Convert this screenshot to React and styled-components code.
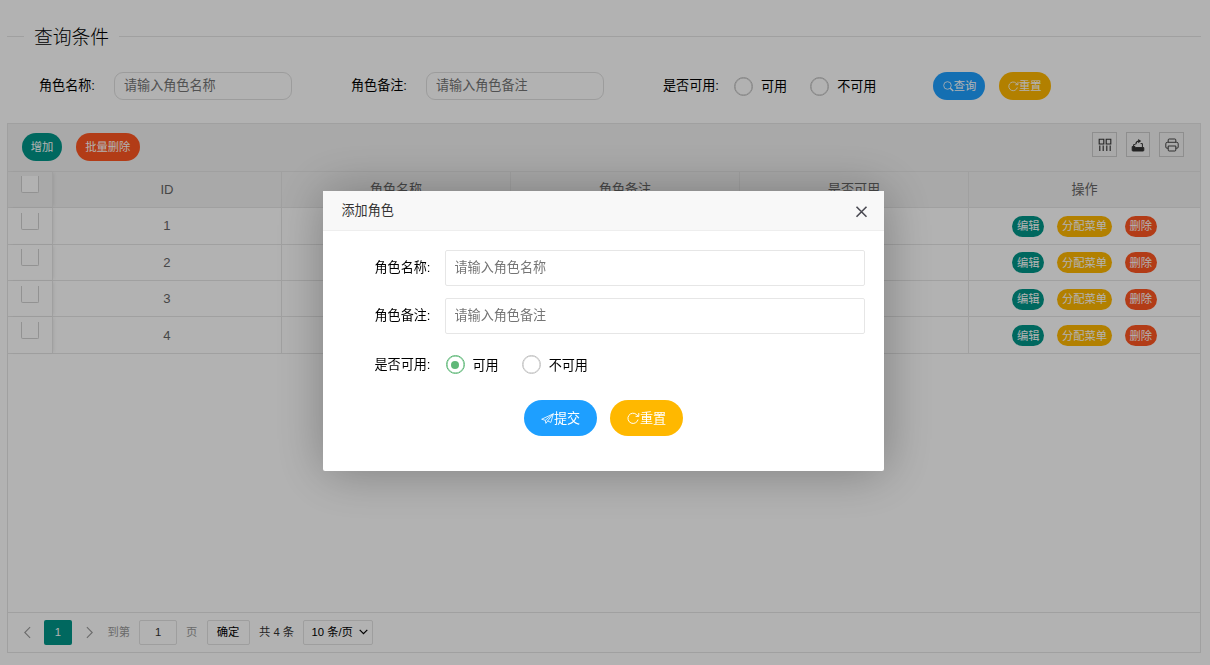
import React from 'react'
import styled, { createGlobalStyle, css } from 'styled-components'

const GlobalStyle = createGlobalStyle`
* { box-sizing: border-box; }
html, body { height: 100%; overflow: hidden; }
body {
    margin: 0;
    background: #fff;
    color: #000;
    font-family: "Liberation Sans", "Noto Sans CJK SC", sans-serif;
    font-size: 13.1px;
    line-height: 22px;
}
button, input { font-family: inherit; }
`

const colors = {
    green: '#009688',
    blue: '#1e9fff',
    yellow: '#ffb800',
    red: '#ff5722',
}

const Page = styled.main`
padding: 21px 9px 12px 7px;
height: 665px;
display: flex;
flex-direction: column;
`

const Search = styled.fieldset`
flex: none;
height: 101.5px;
margin: 0;
padding: 21px 0 0;
border: 0;
border-top: 1px solid #e6e6e6;
min-width: 0;
`

const Legend = styled.legend`
height: 30px;
margin-left: 17px;
padding: 0 10px;
font-size: 18.8px;
font-weight: 300;
line-height: 33px;
`

const SearchRow = styled.div`
display: flex;
align-items: center;
height: 28px;
padding-left: 32px;
`

const Label = styled.label`
flex: none;
width: ${props => props.$width || 75}px;
white-space: nowrap;
`

const inputText = css`
color: #000;
background: #fff;
outline: none;
font-size: 13.1px;
&::placeholder { color: #757575; opacity: 1; }
`

const SearchInput = styled.input`
${inputText}
width: 178px;
height: 28px;
margin-right: 59px;
padding: 0 0 1px 9px;
border: 1px solid #e0e0e0;
border-radius: 9px;
`

const RadioItem = styled.div`
display: flex;
align-items: center;
gap: 8px;
margin-right: 23px;
white-space: nowrap;
`

const RadioText = styled.span`
padding-top: 2px;
`

const RadioMark = styled.span`
width: 19px;
height: 19px;
border-radius: 50%;
border: 1.5px solid ${props => (props.$on ? '#5fb878' : '#c2c2c2')};
box-shadow: inset 0 0 0 .5px ${props => (props.$on ? '#5fb878' : '#c2c2c2')};
display: flex;
align-items: center;
justify-content: center;
&::after {
    content: '';
    width: 8px;
    height: 8px;
    border-radius: 50%;
    background: ${props => (props.$on ? '#5fb878' : 'transparent')};
}
`

const sizes = {
    normal: css`height: 36px; width: 73px; padding: 1px 0 0; font-size: 13.1px;`,
    sm: css`height: 28px; padding: 1px 9.2px 0; font-size: 11.3px;`,
    xs: css`height: 21px; padding: 1px 4.7px 0; font-size: 11.3px;`,
}

const Button = styled.button`
display: inline-flex;
align-items: center;
justify-content: center;
flex: none;
border: 0;
border-radius: 20px;
color: #fff;
white-space: nowrap;
line-height: 1;
background: ${props => colors[props.$color]};
${props => sizes[props.$size || 'sm']}
svg { flex: none; }
`

const SearchButtons = styled.div`
display: flex;
gap: 13.3px;
margin-left: 34px;
`

const TableBox = styled.section`
flex: 1;
display: flex;
flex-direction: column;
border: 1px solid #e6e6e6;
min-height: 0;
`

const Toolbar = styled.div`
flex: none;
display: flex;
align-items: center;
height: 48.2px;
padding: 0 16px 0 13.5px;
background: #f2f2f2;
border-bottom: 1px solid #e6e6e6;
`

const ToolButtons = styled.div`
display: flex;
gap: 13.5px;
`

const Tools = styled.div`
display: flex;
gap: 9px;
margin-left: auto;
padding-bottom: 5px;
`

const Tool = styled.span`
display: flex;
align-items: center;
justify-content: center;
width: 24.7px;
height: 25px;
padding-left: 1px;
border: 1px solid #ccc;
color: #333;
`

const Row = styled.div`
flex: none;
display: grid;
grid-template-columns: 45px repeat(4, 229px) 1fr;
height: 36.45px;
color: #666;
border-bottom: 1px solid #e6e6e6;
background: ${props => (props.$head ? '#f2f2f2' : '#fff')};
`

const Cell = styled.div`
display: flex;
align-items: center;
justify-content: center;
padding-top: 1px;
border-right: 1px solid #e6e6e6;
&:first-child {
    align-items: flex-start;
    justify-content: flex-start;
    padding: 4.5px 0 0 13px;
    box-shadow: 2px 0 3px -1px rgba(0, 0, 0, .08);
}
&:last-child {
    border-right: 0;
    gap: 13px;
}
`

const CheckMark = styled.span`
width: 18px;
height: 17px;
border: 1px solid #d2d2d2;
border-top: 0;
border-radius: 0 0 2px 2px;
background: #fff;
`

const Pager = styled.div`
display: flex;
align-items: center;
height: 40px;
margin-top: auto;
padding: 0 0 1px 12px;
border-top: 1px solid #e6e6e6;
font-size: 11.3px;
color: #333;
`

const PageArrow = styled.span`
display: flex;
justify-content: center;
width: 13px;
color: #999;
`

const PageNow = styled.span`
width: 28px;
margin: 0 11px;
line-height: 25px;
border-radius: 2px;
text-align: center;
color: #fff;
background: #009688;
`

const Muted = styled.span`
color: #999;
`

const JumpText = styled(Muted)`
margin-left: 11.5px;
`

const PageInput = styled.input`
width: 38px;
height: 25px;
margin: 0 9px;
padding: 0;
border: 1px solid #e2e2e2;
border-radius: 2px;
text-align: center;
font-size: 11.3px;
color: #333;
`

const PageBox = styled.span`
display: flex;
align-items: center;
justify-content: space-between;
height: 25px;
margin: 0 9.3px;
padding: 0 ${props => (props.$select ? '4px 0 7px' : '9px')};
width: ${props => (props.$select ? 70 : 43)}px;
border: 1px solid #e2e2e2;
border-radius: 2px;
color: #000;
white-space: nowrap;
`

const Shade = styled.div`
position: fixed;
inset: 0;
display: flex;
align-items: center;
justify-content: center;
padding: 0 3px 3px 0;
background: rgba(0, 0, 0, .3);
`

const Dialog = styled.div`
width: 561px;
height: 280px;
background: #fff;
border-radius: 2px;
box-shadow: 1px 1px 50px rgba(0, 0, 0, .3);
`

const DialogTitle = styled.div`
display: flex;
align-items: center;
justify-content: space-between;
height: 40px;
padding: 0 16px 0 18.5px;
color: #333;
background: #f8f8f8;
border-bottom: 1px solid #eee;
svg { margin-top: 1px; }
`

const DialogForm = styled.div`
display: flex;
flex-direction: column;
gap: 12.4px;
padding: 19px 19px 0 51.5px;
`

const FormRow = styled.div`
display: flex;
align-items: center;
height: 36px;
`

const DialogInput = styled.input`
${inputText}
flex: 1;
height: 36px;
padding: 0 0 1px 9px;
border: 1px solid #e6e6e6;
border-radius: 2px;
`

const DialogButtons = styled.div`
display: flex;
gap: 13px;
margin: 5px 0 0 149.5px;
`

const SearchIcon = () => (
    <svg width="11" height="11" viewBox="0 0 16 16" fill="none" stroke="currentColor" strokeWidth="1.2">
        <circle cx="6.5" cy="6.5" r="5.5" />
        <path d="M10.5 10.5L15 14.5" strokeWidth="2" />
    </svg>
)

const RefreshIcon = ({ size }) => (
    <svg width={size} height={size} viewBox="0 0 16 16" fill="none" stroke="currentColor" strokeWidth="1.2">
        <path d="M13.6 9.3A6.3 6.3 0 1 1 11.8 3.2L14.2 5.2" />
        <path d="M14.5 1.2V5.4H10.6" />
    </svg>
)

const PlaneIcon = () => (
    <svg width="13" height="13" viewBox="0 0 16 16" fill="none" stroke="currentColor" strokeWidth="1" strokeLinejoin="round">
        <path d="M5.2 10.2L.8 8.9 15.2 2.2 12.2 12.8 8.2 11" />
        <path d="M15.2 2.2L5.2 10.2 6 14 8.2 11z" />
    </svg>
)

const ColsIcon = () => (
    <svg width="14" height="14" viewBox="0 0 14 14" fill="none" stroke="currentColor" strokeWidth="1.1">
        <path d="M1.2 1.2H5.8V6H1.2zM8.2 1.2H12.8V6H8.2zM1.8 7.5V13M5.2 7.5V13M8.8 7.5V13M12.2 7.5V13" />
    </svg>
)

const ExportIcon = () => (
    <svg width="14" height="14" viewBox="0 0 14 14" fill="none" stroke="currentColor">
        <path d="M1.2 8.6H4L4.8 9.6H12.8V12.3Q12.8 13 12.1 13H1.9Q1.2 13 1.2 12.3z" fill="currentColor" />
        <path d="M2.6 8.4V6.6H4.4M9.6 5.6H11.4V9" />
        <path d="M4.8 6.3Q5 3.2 8 3" strokeWidth="1.2" />
        <path d="M7.2 1L10.2 3.1 7.2 5.2z" fill="currentColor" stroke="none" />
    </svg>
)

const PrintIcon = () => (
    <svg width="14" height="14" viewBox="0 0 14 14" fill="none" stroke="currentColor" strokeWidth=".9" strokeLinejoin="round">
        <path d="M3.2 4.2V2Q3.2 1 4.2 1H9.8Q10.8 1 10.8 2V4.2" />
        <path d="M3.2 10.2H2Q.8 10.2.8 9V5.8Q.8 4.3 2.3 4.3H11.7Q13.2 4.3 13.2 5.8V9Q13.2 10.2 12 10.2H10.8" />
        <path d="M3.2 8H10.8V12Q10.8 13 9.8 13H4.2Q3.2 13 3.2 12z" />
    </svg>
)

const Chevron = ({ d }) => (
    <svg width="8" height="13" viewBox="0 0 9 14" fill="none" stroke="currentColor" strokeWidth="1.2">
        <path d={d} />
    </svg>
)

const Radio = ({ on, children }) => (
    <RadioItem>
        <RadioMark $on={on} />
        <RadioText>{children}</RadioText>
    </RadioItem>
)

function App() {
    return (
        <>
            <GlobalStyle />
            <Page>
                <Search>
                    <Legend>查询条件</Legend>
                    <SearchRow>
                        <Label>角色名称:</Label>
                        <SearchInput placeholder="请输入角色名称" />
                        <Label>角色备注:</Label>
                        <SearchInput placeholder="请输入角色备注" />
                        <Label $width={71}>是否可用:</Label>
                        <Radio>可用</Radio>
                        <Radio>不可用</Radio>
                        <SearchButtons>
                            <Button $color="blue"><SearchIcon />查询</Button>
                            <Button $color="yellow"><RefreshIcon size={11} />重置</Button>
                        </SearchButtons>
                    </SearchRow>
                </Search>
                <TableBox>
                    <Toolbar>
                        <ToolButtons>
                            <Button $color="green">增加</Button>
                            <Button $color="red">批量删除</Button>
                        </ToolButtons>
                        <Tools>
                            <Tool><ColsIcon /></Tool>
                            <Tool><ExportIcon /></Tool>
                            <Tool><PrintIcon /></Tool>
                        </Tools>
                    </Toolbar>
                    <Row $head>
                        <Cell><CheckMark /></Cell>
                        <Cell>ID</Cell>
                        <Cell>角色名称</Cell>
                        <Cell>角色备注</Cell>
                        <Cell>是否可用</Cell>
                        <Cell>操作</Cell>
                    </Row>
                    {[1, 2, 3, 4].map(id => (
                        <Row key={id}>
                            <Cell><CheckMark /></Cell>
                            <Cell>{id}</Cell>
                            <Cell />
                            <Cell />
                            <Cell />
                            <Cell>
                                <Button $size="xs" $color="green">编辑</Button>
                                <Button $size="xs" $color="yellow">分配菜单</Button>
                                <Button $size="xs" $color="red">删除</Button>
                            </Cell>
                        </Row>
                    ))}
                    <Pager>
                        <PageArrow><Chevron d="M8 1L2 7 8 13" /></PageArrow>
                        <PageNow>1</PageNow>
                        <PageArrow><Chevron d="M1 1L7 7 1 13" /></PageArrow>
                        <JumpText>到第</JumpText>
                        <PageInput defaultValue="1" />
                        <Muted>页</Muted>
                        <PageBox>确定</PageBox>
                        <span>共 4 条</span>
                        <PageBox $select>
                            10 条/页
                            <svg width="9" height="6" viewBox="0 0 9 6" fill="none" stroke="currentColor" strokeWidth="1.2">
                                <path d="M.7.8L4.5 4.6 8.3.8" />
                            </svg>
                        </PageBox>
                    </Pager>
                </TableBox>
            </Page>
            <Shade>
                <Dialog>
                    <DialogTitle>
                        添加角色
                        <svg width="13" height="13" viewBox="0 0 13 13" fill="none" stroke="#4a4a52" strokeWidth="1.6">
                            <path d="M1.5 1.7L11.5 11.7M11.5 1.7L1.5 11.7" />
                        </svg>
                    </DialogTitle>
                    <DialogForm>
                        <FormRow>
                            <Label $width={70}>角色名称:</Label>
                            <DialogInput placeholder="请输入角色名称" />
                        </FormRow>
                        <FormRow>
                            <Label $width={70}>角色备注:</Label>
                            <DialogInput placeholder="请输入角色备注" />
                        </FormRow>
                        <FormRow>
                            <Label $width={71}>是否可用:</Label>
                            <Radio on>可用</Radio>
                            <Radio>不可用</Radio>
                        </FormRow>
                        <DialogButtons>
                            <Button $size="normal" $color="blue"><PlaneIcon />提交</Button>
                            <Button $size="normal" $color="yellow"><RefreshIcon size={13} />重置</Button>
                        </DialogButtons>
                    </DialogForm>
                </Dialog>
            </Shade>
        </>
    )
}

export default App
